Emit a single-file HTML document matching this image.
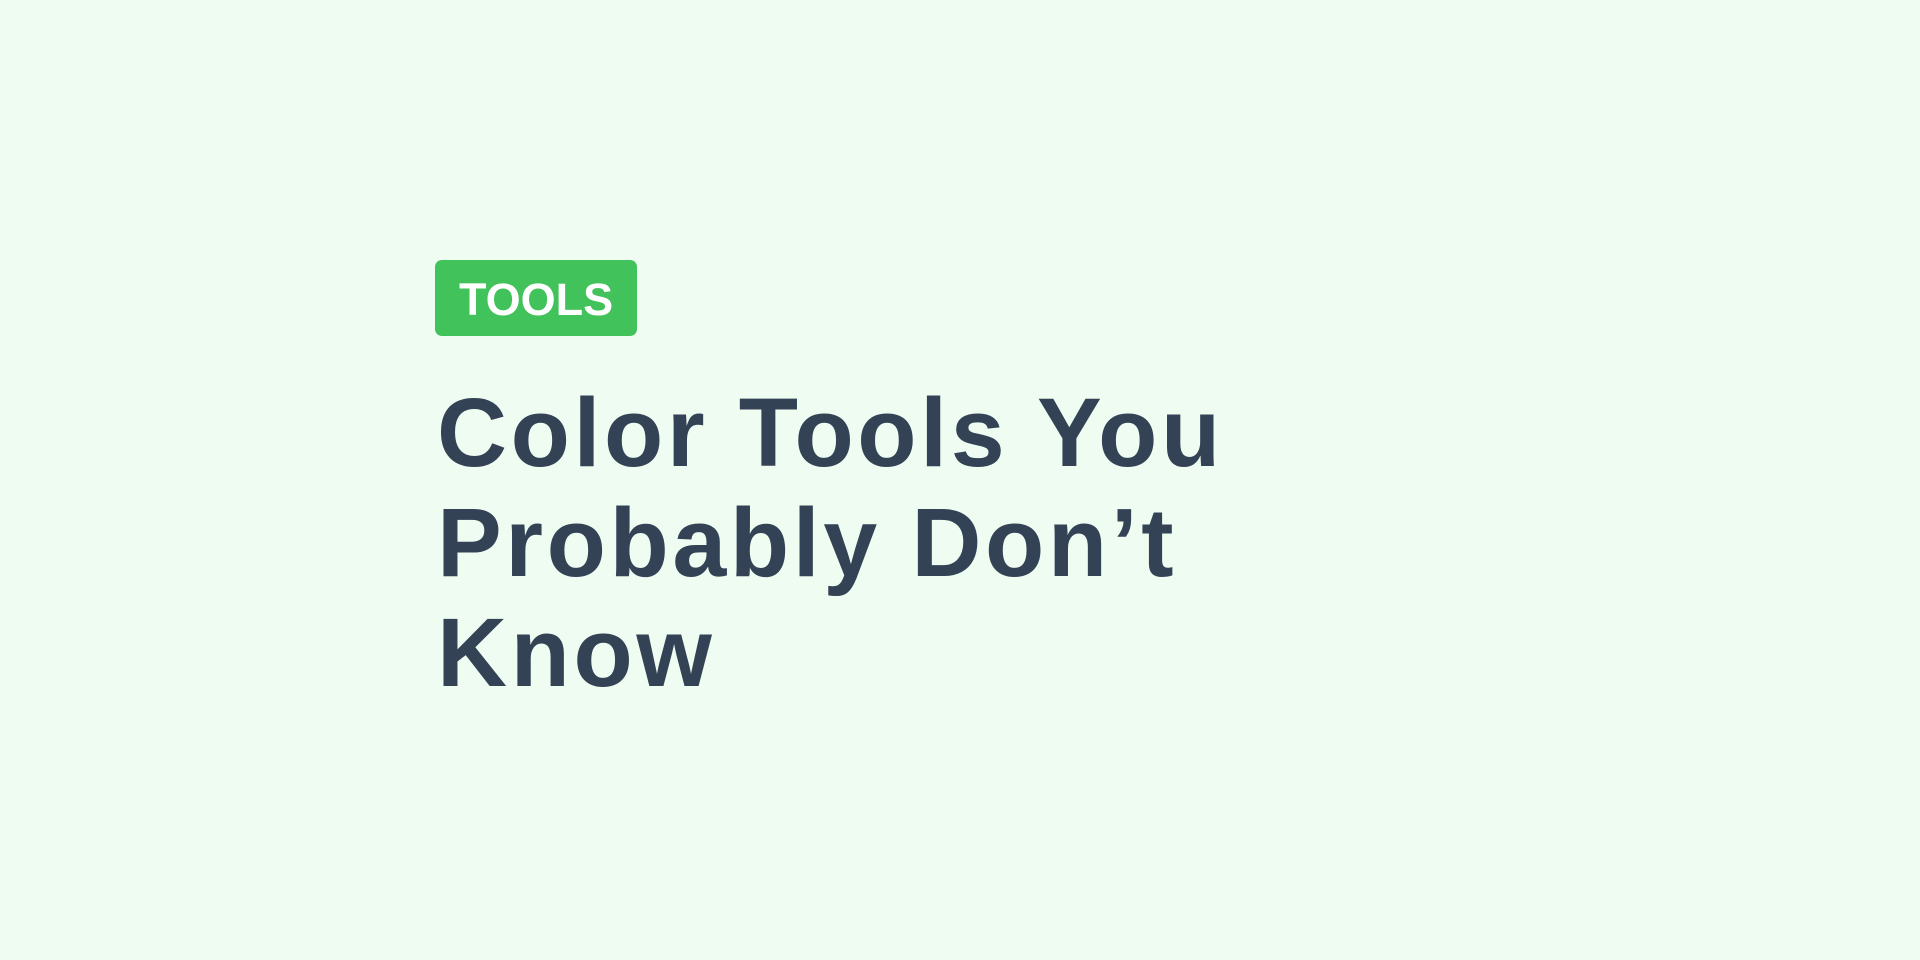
<!DOCTYPE html>
<html><head><meta charset="utf-8"><style>
html,body{margin:0;padding:0;width:1920px;height:960px;background:#eefcf1;overflow:hidden}
.badge{position:absolute;left:435px;top:260px;width:202px;height:76px;background:#42c25a;border-radius:7px}
.bt{position:absolute;left:459px;top:275px;font:bold 45px/50px "Liberation Sans",sans-serif;color:#fff;white-space:nowrap}
h1{position:absolute;left:437px;top:378px;margin:0;font:bold 97px/110px "Liberation Sans",sans-serif;color:#344256;letter-spacing:3.6px;white-space:nowrap}
</style></head><body>
<div class="badge"></div>
<div class="bt">TOOLS</div>
<h1>Color Tools You<br>Probably Don’t<br>Know</h1>
</body></html>
